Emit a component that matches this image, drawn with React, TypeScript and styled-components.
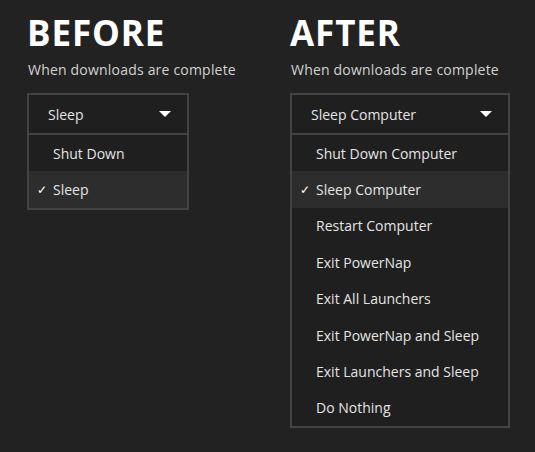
import React from 'react';
import styled, { createGlobalStyle } from 'styled-components';

const GlobalStyle = createGlobalStyle`
  html, body {
    margin: 0;
    background: #222222;
  }
  body {
    font-family: 'Open Sans', 'Noto Sans', sans-serif;
    color: #e4e4e4;
  }
`;

const Page = styled.div`
  display: grid;
  grid-template-columns: 263px 219px;
  align-items: start;
  padding: 15px 0 0 27px;
  width: 535px;
  height: 452px;
  box-sizing: border-box;
`;

const Column = styled.section`
  display: flex;
  flex-direction: column;
`;

const Title = styled.h1`
  margin: 0;
  font-size: 35px;
  line-height: 35px;
  font-weight: 700;
  color: #ffffff;
  letter-spacing: 0.9px;
`;

const Label = styled.p`
  margin: 10px 0 13px 1px;
  font-size: 14px;
  line-height: 20px;
  color: #d2d2d2;
  letter-spacing: 0.2px;
`;

const Select = styled.div<{ $width: number }>`
  width: ${(p) => p.$width}px;
  border: 2px solid #434343;
  background: #1f1f1f;
  box-sizing: border-box;
`;

const Header = styled.div`
  display: flex;
  align-items: center;
  justify-content: space-between;
  height: 38px;
  padding: 0 16px 0 19px;
  border-bottom: 2px solid #434343;
  font-size: 14px;
`;

const Caret = styled.span`
  width: 0;
  height: 0;
  border-left: 6px solid transparent;
  border-right: 6px solid transparent;
  border-top: 6px solid #ffffff;
`;

const List = styled.ul`
  list-style: none;
  margin: 0;
  padding: 0;
`;

const Item = styled.li<{ $active?: boolean }>`
  display: flex;
  align-items: center;
  height: 36.4px;
  padding-left: 8px;
  font-size: 14px;
  background: ${(p) => (p.$active ? '#2d2d2d' : 'transparent')};
`;

const Check = styled.span`
  width: 16px;
  font-size: 12px;
  color: #ffffff;
`;

type DropdownProps = {
  width: number;
  value: string;
  options: string[];
};

function Dropdown({ width, value, options }: DropdownProps) {
  return (
    <Select $width={width}>
      <Header>
        <span>{value}</span>
        <Caret />
      </Header>
      <List>
        {options.map((opt) => (
          <Item key={opt} $active={opt === value}>
            <Check>{opt === value ? '✓' : ''}</Check>
            {opt}
          </Item>
        ))}
      </List>
    </Select>
  );
}

const afterOptions = [
  'Shut Down Computer',
  'Sleep Computer',
  'Restart Computer',
  'Exit PowerNap',
  'Exit All Launchers',
  'Exit PowerNap and Sleep',
  'Exit Launchers and Sleep',
  'Do Nothing',
];

export default function App() {
  return (
    <>
      <GlobalStyle />
      <Page>
        <Column>
          <Title>BEFORE</Title>
          <Label>When downloads are complete</Label>
          <Dropdown width={162} value="Sleep" options={['Shut Down', 'Sleep']} />
        </Column>
        <Column>
          <Title>AFTER</Title>
          <Label>When downloads are complete</Label>
          <Dropdown width={220} value="Sleep Computer" options={afterOptions} />
        </Column>
      </Page>
    </>
  );
}
